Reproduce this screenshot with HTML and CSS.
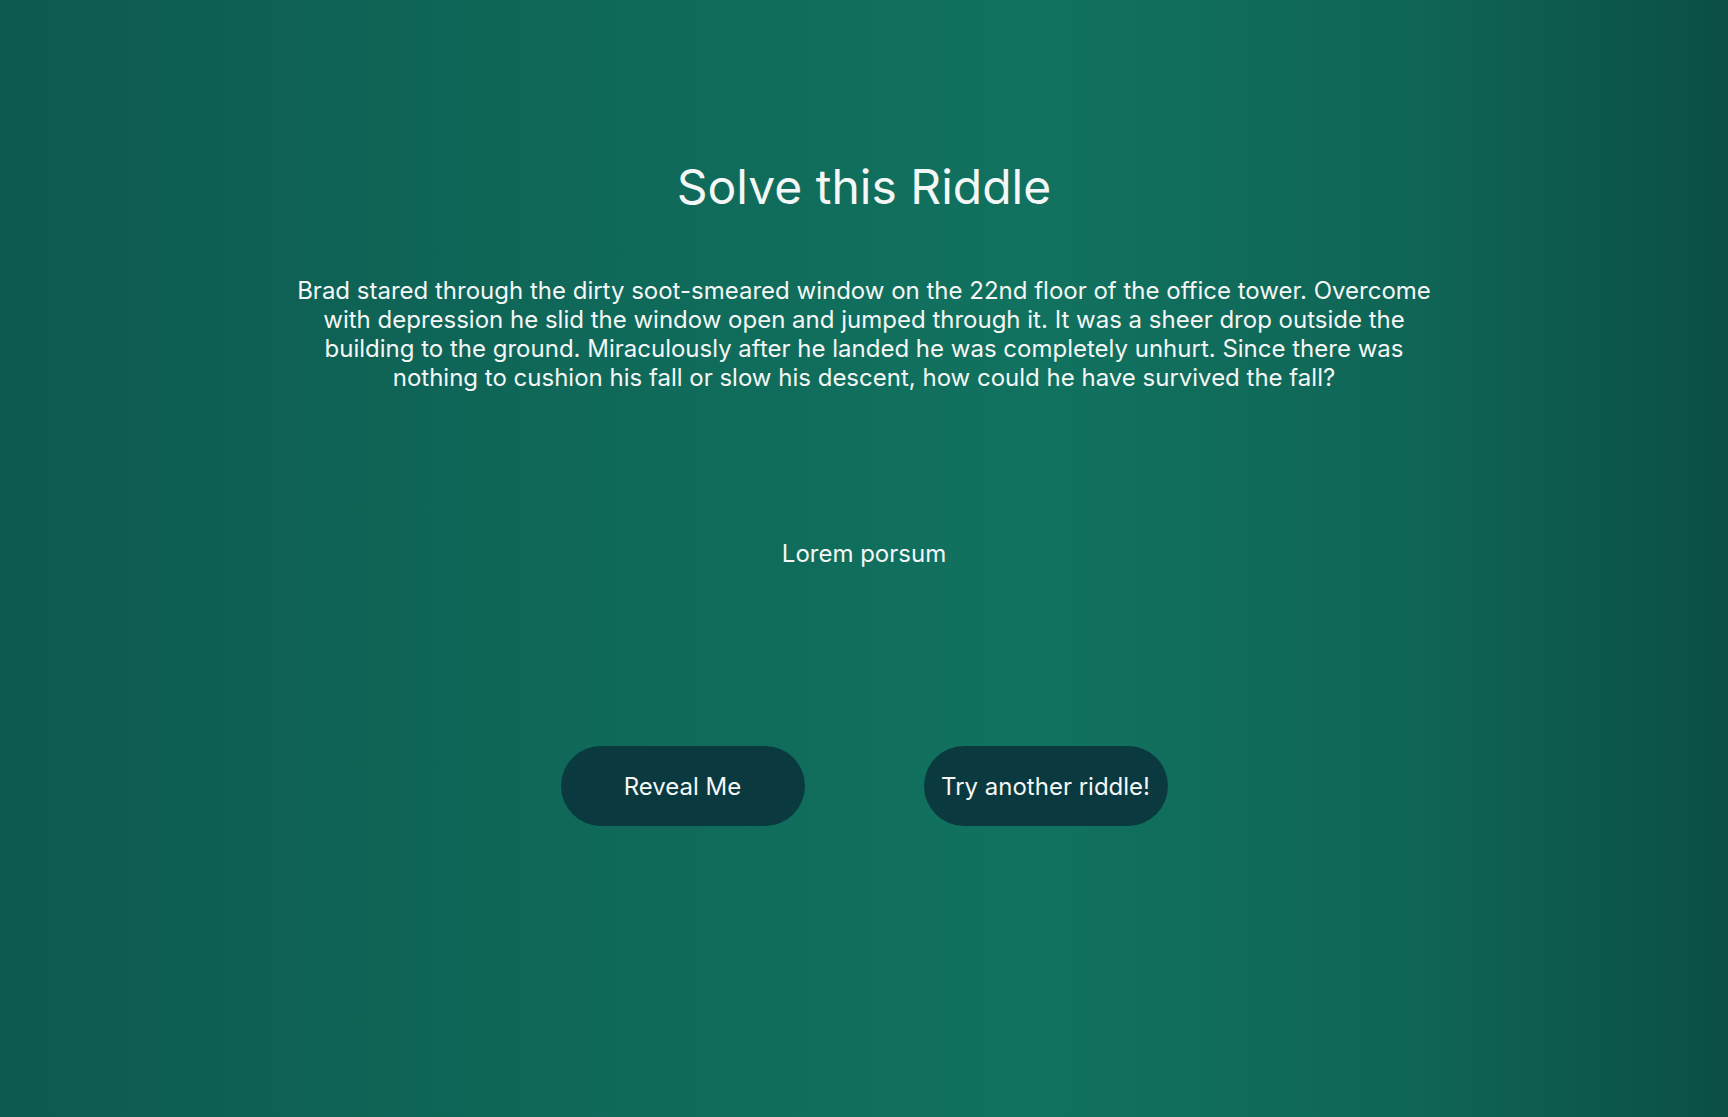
FILE: index.html
```html
<!DOCTYPE html>
<html lang="en">
<head>
<meta charset="utf-8">
<title>Solve this Riddle</title>
<link rel="stylesheet" href="styles.css">
</head>
<body>
<main class="page">
  <h1 class="title">Solve this Riddle</h1>
  <p class="riddle">Brad stared through the dirty soot-smeared window on the 22nd floor of the office tower. Overcome with depression he slid the window open and jumped through it. It was a sheer drop outside the building to the ground. Miraculously after he landed he was completely unhurt. Since there was nothing to cushion his fall or slow his descent, how could he have survived the fall?</p>
  <p class="answer">Lorem porsum</p>
  <div class="actions">
    <button class="btn" type="button">Reveal Me</button>
    <button class="btn" type="button">Try another riddle!</button>
  </div>
</main>
</body>
</html>
```
FILE: styles.css
```css
* { box-sizing: border-box; }
html, body { margin: 0; padding: 0; }
body {
  min-height: 100vh;
  font-family: Inter, "Noto Sans", sans-serif;
  color: #f4f7f6;
  background: linear-gradient(90deg, #0d5a50 0%, #0f6758 30%, #11725f 60%, #0f6556 82%, #0b4f45 100%);
}
.page {
  display: flex;
  flex-direction: column;
  align-items: center;
  padding-top: 158px;
}
.title {
  margin: 0;
  font-size: 48px;
  line-height: 58px;
  font-weight: 400;
}
.riddle {
  margin: 60px 0 0;
  max-width: 1165px;
  font-size: 24px;
  line-height: 29px;
  text-align: center;
}
.answer {
  margin: 147px 0 0;
  font-size: 24px;
  line-height: 29px;
}
.actions {
  display: flex;
  gap: 119px;
  margin-top: 178px;
}
.btn {
  width: 244px;
  height: 80px;
  border: none;
  border-radius: 40px;
  background: #0a3a40;
  color: #f4f7f6;
  font-family: Inter, "Noto Sans", sans-serif;
  font-size: 24px;
  padding: 0;
}
```
